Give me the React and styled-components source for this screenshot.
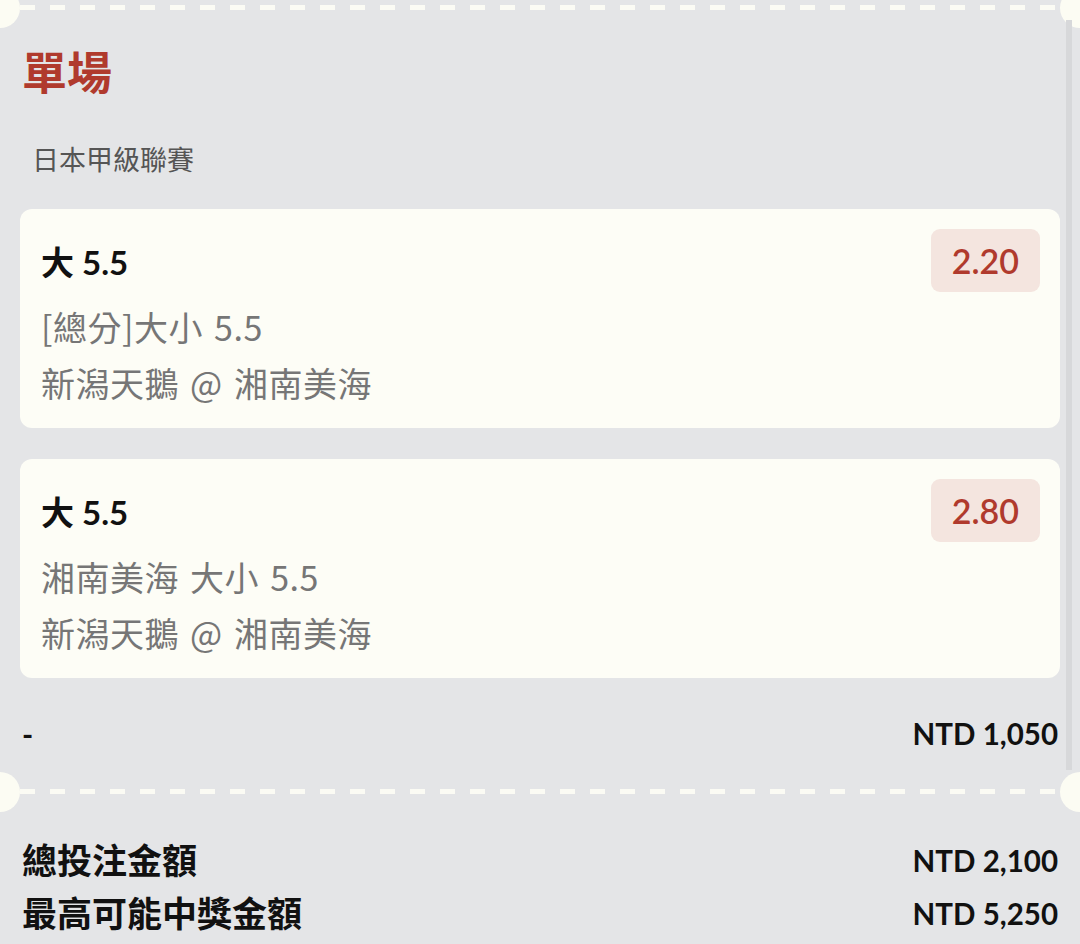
import React from "react";
import styled, { createGlobalStyle } from "styled-components";

const bets = [
  { pick: "大 5.5", odds: "2.20", market: "[總分]大小 5.5", match: "新潟天鵝 @ 湘南美海" },
  { pick: "大 5.5", odds: "2.80", market: "湘南美海 大小 5.5", match: "新潟天鵝 @ 湘南美海" },
];

export default function App() {
  return (
    <>
      <GlobalStyle />
      <Page>
        <Separator />
        <Title>單場</Title>
        <League>日本甲級聯賽</League>
        <CardList>
          {bets.map((bet, i) => (
            <Card key={i}>
              <CardHead>
                <Pick>{bet.pick}</Pick>
                <Odds>{bet.odds}</Odds>
              </CardHead>
              <Info>{bet.market}</Info>
              <Info>{bet.match}</Info>
            </Card>
          ))}
        </CardList>
        <Row>
          <span>-</span>
          <Amount>NTD 1,050</Amount>
        </Row>
        <Separator $gap={37} />
        <Totals>
          <TotalRow>
            <span>總投注金額</span>
            <Amount>NTD 2,100</Amount>
          </TotalRow>
          <TotalRow>
            <span>最高可能中獎金額</span>
            <Amount>NTD 5,250</Amount>
          </TotalRow>
        </Totals>
        <Scrollbar />
      </Page>
    </>
  );
}

const GlobalStyle = createGlobalStyle`
  body {
    margin: 0;
    background: #e4e5e7;
    font-family: Lato, "Noto Sans CJK TC", sans-serif;
  }
`;

const Page = styled.div`
  position: relative;
  min-height: 944px;
  padding: 5px 20px 0;
  box-sizing: border-box;
  overflow: hidden;
  background: #e4e5e7;
  color: #111;
`;

const Separator = styled.div`
  position: relative;
  height: 5px;
  margin: ${({ $gap }) => ($gap ? `${$gap}px` : "0")} 0 0;
  background: repeating-linear-gradient(
    to right,
    #fbfbf4 0 15px,
    transparent 15px 30px
  );

  &::before,
  &::after {
    content: "";
    position: absolute;
    top: 50%;
    width: 40px;
    height: 40px;
    margin-top: -20px;
    border-radius: 50%;
    background: #fcfcf3;
  }
  &::before {
    left: -40px;
  }
  &::after {
    right: -40px;
  }
`;

const Title = styled.h1`
  margin: 36px 0 0 2px;
  font-size: 45px;
  line-height: 54px;
  font-weight: 700;
  color: #b03a2d;
`;

const League = styled.div`
  margin: 42px 0 0 12px;
  font-size: 27px;
  line-height: 36px;
  color: #555;
`;

const CardList = styled.div`
  display: flex;
  flex-direction: column;
  gap: 31px;
  margin-top: 31px;
`;

const Card = styled.div`
  background: #fdfdf6;
  border-radius: 12px;
  padding: 20px 20px 17px 21px;
`;

const CardHead = styled.div`
  display: flex;
  align-items: center;
  justify-content: space-between;
  margin-bottom: 7px;
`;

const Pick = styled.div`
  font-size: 33px;
  font-weight: 700;
  color: #111;
`;

const Odds = styled.div`
  height: 63px;
  padding: 0 21px;
  display: flex;
  align-items: center;
  border-radius: 9px;
  background: #f4e5df;
  color: #b03a2d;
  font-size: 34px;
  font-weight: 600;
`;

const Info = styled.div`
  font-family: "Noto Sans CJK TC", sans-serif;
  font-size: 34px;
  line-height: 56px;
  letter-spacing: 0.5px;
  word-spacing: 3px;
  color: #767676;
`;

const Row = styled.div`
  display: flex;
  justify-content: space-between;
  align-items: center;
  margin-top: 38px;
  padding: 0 2px;
  font-size: 30px;
  line-height: 36px;
  font-weight: 700;
`;

const Amount = styled.span`
  font-size: 29.5px;
  font-weight: 700;
  color: #111;
`;

const Totals = styled.div`
  margin-top: 40px;
  padding: 0 2px;
`;

const TotalRow = styled.div`
  display: flex;
  justify-content: space-between;
  align-items: center;
  font-size: 35px;
  line-height: 53px;
  font-weight: 700;
`;

const Scrollbar = styled.div`
  position: absolute;
  top: 20px;
  right: 8px;
  width: 6px;
  height: 750px;
  background: #d7d8da;
`;
